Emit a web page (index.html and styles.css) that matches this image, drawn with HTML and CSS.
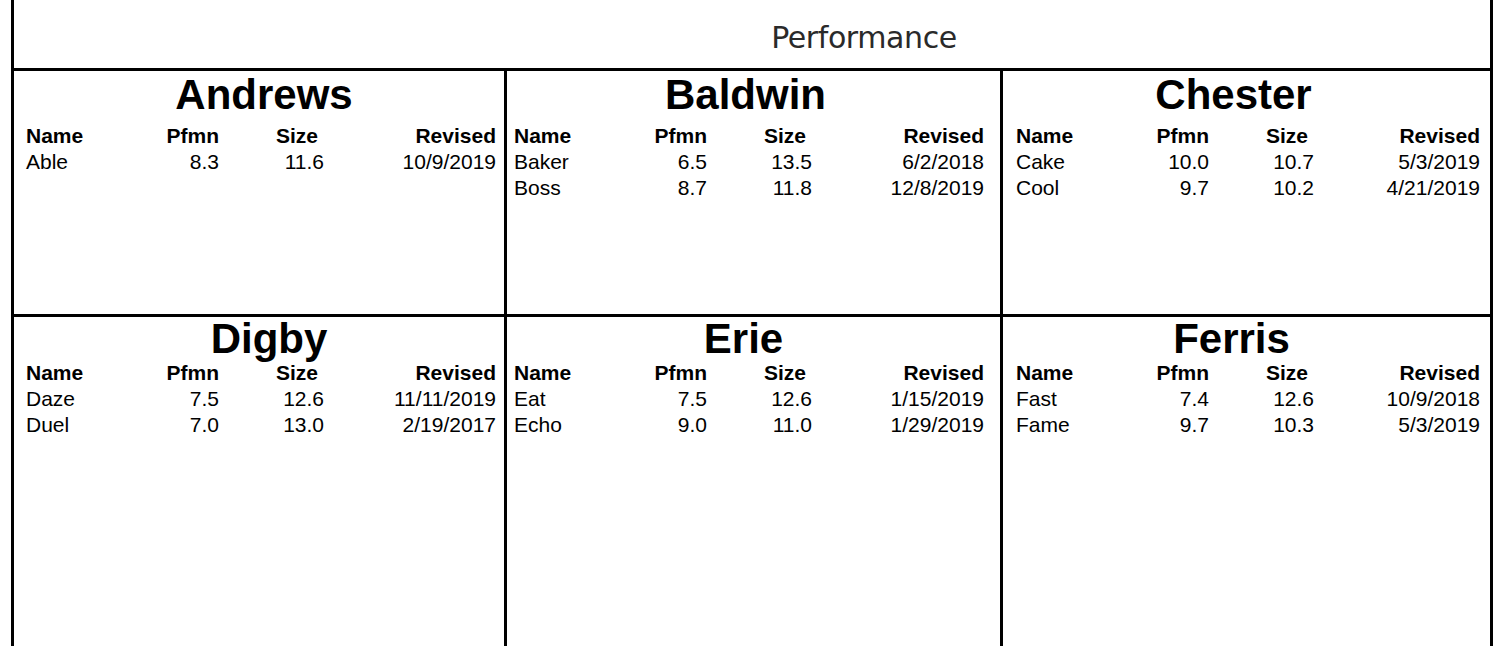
FILE: index.html
```html
<!DOCTYPE html>
<html lang="en">
<head>
<meta charset="utf-8">
<title>Performance</title>
<link rel="stylesheet" href="styles.css">
</head>
<body>
<div class="report">
  <div class="report-head">Performance</div>

  <section class="panel p1 top">
    <h2 class="team t-andrews">Andrews</h2>
    <div class="grid">
      <div class="th">Name</div><div class="th num">Pfmn</div><div class="th num size">Size</div><div class="th num">Revised</div>
      <div>Able</div><div class="num">8.3</div><div class="num">11.6</div><div class="num">10/9/2019</div>
    </div>
  </section>

  <section class="panel p2 top">
    <h2 class="team t-baldwin">Baldwin</h2>
    <div class="grid">
      <div class="th">Name</div><div class="th num">Pfmn</div><div class="th num size">Size</div><div class="th num">Revised</div>
      <div>Baker</div><div class="num">6.5</div><div class="num">13.5</div><div class="num">6/2/2018</div>
      <div>Boss</div><div class="num">8.7</div><div class="num">11.8</div><div class="num">12/8/2019</div>
    </div>
  </section>

  <section class="panel p3 top">
    <h2 class="team t-chester">Chester</h2>
    <div class="grid">
      <div class="th">Name</div><div class="th num">Pfmn</div><div class="th num size">Size</div><div class="th num">Revised</div>
      <div>Cake</div><div class="num">10.0</div><div class="num">10.7</div><div class="num">5/3/2019</div>
      <div>Cool</div><div class="num">9.7</div><div class="num">10.2</div><div class="num">4/21/2019</div>
    </div>
  </section>

  <section class="panel p1 bottom">
    <h2 class="team t-digby">Digby</h2>
    <div class="grid">
      <div class="th">Name</div><div class="th num">Pfmn</div><div class="th num size">Size</div><div class="th num">Revised</div>
      <div>Daze</div><div class="num">7.5</div><div class="num">12.6</div><div class="num">11/11/2019</div>
      <div>Duel</div><div class="num">7.0</div><div class="num">13.0</div><div class="num">2/19/2017</div>
    </div>
  </section>

  <section class="panel p2 bottom">
    <h2 class="team t-erie">Erie</h2>
    <div class="grid">
      <div class="th">Name</div><div class="th num">Pfmn</div><div class="th num size">Size</div><div class="th num">Revised</div>
      <div>Eat</div><div class="num">7.5</div><div class="num">12.6</div><div class="num">1/15/2019</div>
      <div>Echo</div><div class="num">9.0</div><div class="num">11.0</div><div class="num">1/29/2019</div>
    </div>
  </section>

  <section class="panel p3 bottom">
    <h2 class="team t-ferris">Ferris</h2>
    <div class="grid">
      <div class="th">Name</div><div class="th num">Pfmn</div><div class="th num size">Size</div><div class="th num">Revised</div>
      <div>Fast</div><div class="num">7.4</div><div class="num">12.6</div><div class="num">10/9/2018</div>
      <div>Fame</div><div class="num">9.7</div><div class="num">10.3</div><div class="num">5/3/2019</div>
    </div>
  </section>
</div>
</body>
</html>
```

FILE: styles.css
```css
html, body {
  margin: 0;
  padding: 0;
  background: #fff;
  overflow: hidden;
}

body {
  font-family: "Liberation Sans", Arial, sans-serif;
  color: #000;
}

.report {
  margin-left: 11px;
  width: 1476px;
  border-left: 3px solid #000;
  border-right: 3px solid #000;
  display: grid;
  grid-template-columns: 490px 496px 490px;
  grid-template-rows: 71px 246px 329px;
}

.report-head {
  grid-column: 1 / -1;
  box-sizing: border-box;
  border-bottom: 3px solid #000;
  padding: 23px 0 0 224px;
  text-align: center;
  font-family: "DejaVu Sans", Verdana, sans-serif;
  font-size: 30px;
  line-height: 30px;
  letter-spacing: -0.4px;
  color: #2a2a2a;
}

.panel {
  box-sizing: border-box;
  min-width: 0;
}

.panel.top {
  border-bottom: 3px solid #000;
}

.p2, .p3 {
  border-left: 3px solid #000;
}

.team {
  margin: 0;
  font-size: 42px;
  line-height: 47px;
  font-weight: bold;
  text-align: center;
}

.top .team {
  margin-bottom: 5px;
}

.bottom .team {
  margin-top: -2px;
  margin-bottom: -2px;
}

.t-andrews { padding-left: 10px; }
.t-baldwin { padding-right: 16px; }
.t-chester { padding-right: 26px; }
.t-digby { padding-left: 20px; }
.t-erie { padding-right: 20px; }
.t-ferris { padding-right: 30px; }

.grid {
  display: grid;
  grid-template-columns: 100px 93px 105px 1fr;
  font-size: 21px;
  line-height: 26px;
}

.p1 .grid { padding: 0 8px 0 12px; }
.p2 .grid { padding: 0 16px 0 7px; }
.p3 .grid { padding: 0 10px 0 13px; }

.th {
  font-weight: bold;
}

.num {
  text-align: right;
}

.th.size {
  padding-right: 6px;
}
```
